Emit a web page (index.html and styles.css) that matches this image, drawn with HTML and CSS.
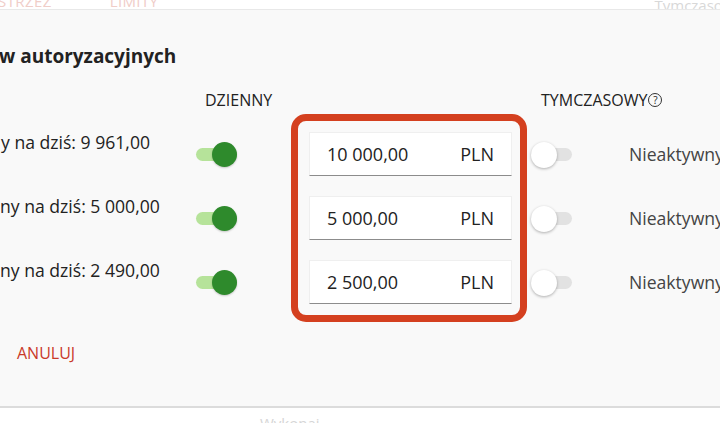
FILE: index.html
```html
<!DOCTYPE html>
<html lang="pl">
<head>
  <meta charset="UTF-8" />
  <meta name="viewport" content="width=device-width, initial-scale=1.0" />
  <title>Limity autoryzacyjne</title>
  <link rel="stylesheet" href="styles.css">
</head>
<body>
  <nav class="tabs">
    <span class="tab tab-first">STRZEŻ</span>
    <span class="tab">LIMITY</span>
    <span class="tab-side">Tymczasowy</span>
  </nav>

  <section class="dialog">
    <h2 class="title">w autoryzacyjnych</h2>

    <div class="limits">
      <div class="col col-labels">
        <div class="col-head"></div>
        <div class="row label label-1">y na dziś: 9 961,00</div>
        <div class="row label">ny na dziś: 5 000,00</div>
        <div class="row label">ny na dziś: 2 490,00</div>
      </div>

      <div class="col col-daily">
        <div class="col-head">DZIENNY</div>
        <div class="row"><span class="toggle on"><span class="track"></span><span class="knob"></span></span></div>
        <div class="row"><span class="toggle on"><span class="track"></span><span class="knob"></span></span></div>
        <div class="row"><span class="toggle on"><span class="track"></span><span class="knob"></span></span></div>
      </div>

      <div class="amounts">
        <div class="amount"><span>10 000,00</span><span>PLN</span></div>
        <div class="amount"><span>5 000,00</span><span>PLN</span></div>
        <div class="amount"><span>2 500,00</span><span>PLN</span></div>
      </div>

      <div class="col col-temp">
        <div class="col-head">TYMCZASOWY<span class="help">?</span></div>
        <div class="row"><span class="toggle"><span class="track"></span><span class="knob"></span></span><span class="status">Nieaktywny</span></div>
        <div class="row"><span class="toggle"><span class="track"></span><span class="knob"></span></span><span class="status">Nieaktywny</span></div>
        <div class="row"><span class="toggle"><span class="track"></span><span class="knob"></span></span><span class="status">Nieaktywny</span></div>
      </div>
    </div>

    <button class="cancel">ANULUJ</button>
  </section>

  <footer class="below">
    <span>Wykonaj</span>
  </footer>
</body>
</html>
```

FILE: styles.css
```css
:root {
  --red: #d4401f;
  --green: #2e8a2c;
  --green-light: #b6e39a;
  --text: #222;
  --muted: #444;
}

* {
  box-sizing: border-box;
  margin: 0;
  padding: 0;
  font-family: "Open Sans", sans-serif;
}

body {
  background: #fff;
  color: var(--text);
  width: 720px;
  height: 423px;
  overflow: hidden;
}

.tabs {
  height: 10px;
  overflow: hidden;
  display: flex;
  border-bottom: 1px solid #e8e8e8;
  background: #fff;
  font-size: 15px;
  line-height: 15px;
}

.tab {
  color: #f0cdc8;
  margin-top: -6px;
  margin-left: 58px;
  letter-spacing: 0.4px;
}

.tab-first {
  margin-left: -2px;
}

.tab-side {
  color: #d8d8d8;
  margin-left: auto;
  margin-right: -22px;
  margin-top: -2px;
}

.dialog {
  background: #f9f9f9;
  height: 398px;
  padding-top: 33px;
  border-bottom: 2px solid #dcdcdc;
}

.title {
  font-size: 19px;
  font-weight: 700;
  line-height: 26px;
  margin-left: -1px;
}

.limits {
  display: flex;
  align-items: flex-start;
  margin-top: 21px;
}

.col {
  flex-shrink: 0;
}

.col-head {
  height: 20px;
  font-size: 16px;
  line-height: 20px;
  margin-bottom: 12px;
  display: flex;
  align-items: center;
}

.row {
  height: 64px;
  display: flex;
  align-items: center;
}

.col-labels {
  width: 196px;
}

.label {
  align-items: flex-start;
  padding-top: 8px;
  font-size: 17.6px;
  line-height: 24px;
  white-space: nowrap;
}

.label-1 {
  padding-left: 1px;
}

.col-daily {
  width: 95px;
}

.col-daily .col-head {
  padding-left: 9px;
}

.toggle {
  position: relative;
  width: 41px;
  height: 25px;
  display: block;
  flex-shrink: 0;
}

.track {
  display: block;
  height: 13px;
  margin-top: 6px;
  border-radius: 7px;
  background: #e2e2e2;
}

.knob {
  position: absolute;
  top: 0;
  left: 0;
  width: 26px;
  height: 26px;
  border-radius: 50%;
  background: #fff;
  box-shadow: 0 1px 3px rgba(0, 0, 0, 0.3);
}

.toggle.on .track {
  background: var(--green-light);
}

.toggle.on .knob {
  left: auto;
  right: 0;
  width: 25px;
  height: 25px;
  background: var(--green);
  box-shadow: 0 1px 2px rgba(0, 0, 0, 0.2);
}

.amounts {
  flex-shrink: 0;
  width: 236px;
  margin-top: 24px;
  border: 7px solid var(--red);
  border-radius: 15px;
  padding: 11px 8px 11px 11px;
  display: flex;
  flex-direction: column;
  gap: 20px;
}

.amount {
  height: 44px;
  background: #fff;
  border: 1px solid #efefef;
  border-bottom: 1px solid #8c8c8c;
  display: flex;
  justify-content: space-between;
  align-items: center;
  padding: 0 17px 0 17px;
  font-size: 18px;
}

.col-temp {
  flex: 1 0 0;
  min-width: 0;
  padding-left: 4px;
}

.col-temp .col-head {
  padding-left: 10px;
}

.help {
  width: 14px;
  height: 14px;
  margin-left: 1px;
  border: 1px solid #333;
  border-radius: 50%;
  font-size: 10px;
  line-height: 12px;
  text-align: center;
}

.status {
  margin-left: 57px;
  font-size: 17.6px;
  color: var(--muted);
  white-space: nowrap;
}

.cancel {
  display: block;
  margin: 20px 0 0 17px;
  background: none;
  border: none;
  color: #c93a2a;
  font-size: 16px;
  line-height: 22px;
  cursor: pointer;
}

.below {
  padding-left: 260px;
  padding-top: 5px;
  color: #d6d6d6;
  font-size: 15px;
  line-height: 20px;
}
```
